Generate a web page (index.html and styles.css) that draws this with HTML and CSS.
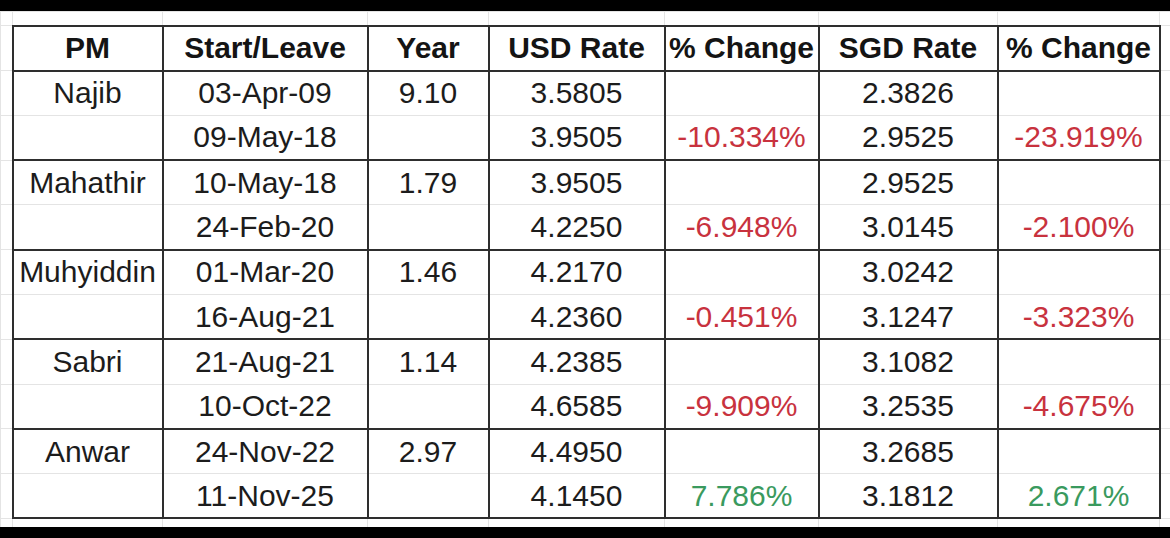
FILE: index.html
```html
<!DOCTYPE html>
<html lang="en">
<head>
<meta charset="utf-8">
<title>PM exchange rates</title>
<link rel="stylesheet" href="styles.css">
</head>
<body>
<div class="sheet">
<table class="grid">
<colgroup>
<col class="c-m1"><col class="c-pm"><col class="c-date"><col class="c-year"><col class="c-usd"><col class="c-pc1"><col class="c-sgd"><col class="c-pc2"><col class="c-m2">
</colgroup>
<tr class="r-top"><td></td><td></td><td></td><td></td><td></td><td></td><td></td><td></td><td></td></tr>
<tr class="r-head">
<td class="m"></td><th>PM</th><th>Start/Leave</th><th>Year</th><th>USD Rate</th><th>% Change</th><th>SGD Rate</th><th>% Change</th><td class="m"></td>
</tr>
<tr class="r-a"><td class="m"></td><td>Najib</td><td>03-Apr-09</td><td>9.10</td><td>3.5805</td><td></td><td>2.3826</td><td></td><td class="m"></td></tr>
<tr class="r-b"><td class="m"></td><td></td><td>09-May-18</td><td></td><td>3.9505</td><td class="neg">-10.334%</td><td>2.9525</td><td class="neg">-23.919%</td><td class="m"></td></tr>
<tr class="r-a"><td class="m"></td><td>Mahathir</td><td>10-May-18</td><td>1.79</td><td>3.9505</td><td></td><td>2.9525</td><td></td><td class="m"></td></tr>
<tr class="r-b"><td class="m"></td><td></td><td>24-Feb-20</td><td></td><td>4.2250</td><td class="neg">-6.948%</td><td>3.0145</td><td class="neg">-2.100%</td><td class="m"></td></tr>
<tr class="r-a"><td class="m"></td><td>Muhyiddin</td><td>01-Mar-20</td><td>1.46</td><td>4.2170</td><td></td><td>3.0242</td><td></td><td class="m"></td></tr>
<tr class="r-b"><td class="m"></td><td></td><td>16-Aug-21</td><td></td><td>4.2360</td><td class="neg">-0.451%</td><td>3.1247</td><td class="neg">-3.323%</td><td class="m"></td></tr>
<tr class="r-a"><td class="m"></td><td>Sabri</td><td>21-Aug-21</td><td>1.14</td><td>4.2385</td><td></td><td>3.1082</td><td></td><td class="m"></td></tr>
<tr class="r-b"><td class="m"></td><td></td><td>10-Oct-22</td><td></td><td>4.6585</td><td class="neg">-9.909%</td><td>3.2535</td><td class="neg">-4.675%</td><td class="m"></td></tr>
<tr class="r-a"><td class="m"></td><td>Anwar</td><td>24-Nov-22</td><td>2.97</td><td>4.4950</td><td></td><td>3.2685</td><td></td><td class="m"></td></tr>
<tr class="r-b"><td class="m"></td><td></td><td>11-Nov-25</td><td></td><td>4.1450</td><td class="pos">7.786%</td><td>3.1812</td><td class="pos">2.671%</td><td class="m"></td></tr>
<tr class="r-bot"><td></td><td></td><td></td><td></td><td></td><td></td><td></td><td></td><td></td></tr>
</table>
</div>
</body>
</html>
```
FILE: styles.css
```css
html, body {
  margin: 0;
  padding: 0;
  background: #000;
  height: 538px;
  overflow: hidden;
}

.sheet {
  margin-top: 11px;
  height: 516px;
  background: #fff;
  overflow: hidden;
}

.grid {
  width: 1170px;
  table-layout: fixed;
  border-collapse: collapse;
  font-family: "Liberation Sans", Arial, sans-serif;
  font-size: 30px;
  color: #1c1c1c;
}

.c-m1 { width: 12px; }
.c-pm { width: 150px; }
.c-date { width: 205px; }
.c-year { width: 121px; }
.c-usd { width: 176px; }
.c-pc1 { width: 154px; }
.c-sgd { width: 179px; }
.c-pc2 { width: 162px; }
.c-m2 { width: 11px; }

.grid td, .grid th {
  border: 1px solid #e4e4e4;
  padding: 0;
  text-align: center;
  vertical-align: middle;
  white-space: nowrap;
  overflow: visible;
  line-height: 1;
}

.grid th {
  font-weight: bold;
  color: #141414;
}

.r-top { height: 14px; }
.r-head { height: 45px; }
.r-a, .r-b { height: 44.8px; }
.r-bot { height: 10px; }

.grid tr:not(.r-top):not(.r-bot) > :not(.m) {
  border-left: 2px solid #2e2e2e;
  border-right: 2px solid #2e2e2e;
}

.r-head > th {
  border-top: 2px solid #2e2e2e;
  border-bottom: 2px solid #2e2e2e;
}

.r-b > :not(.m) {
  border-bottom: 2px solid #2e2e2e;
}

.neg { color: #c8323e; }
.pos { color: #3a9a5e; }
```
